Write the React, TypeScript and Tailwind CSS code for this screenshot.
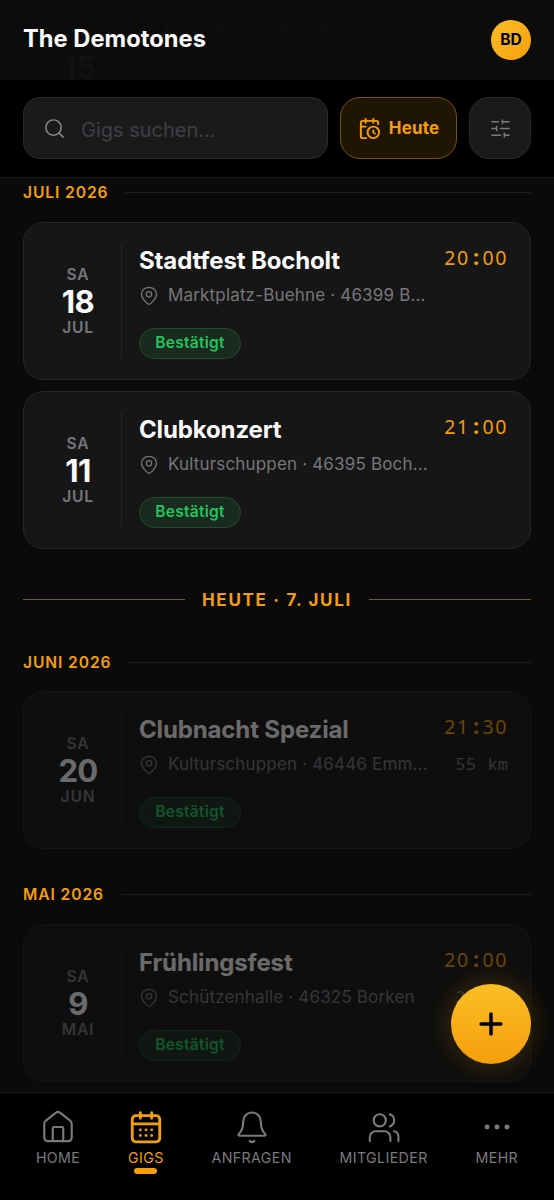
import { CalendarClock, Plus, Search, SlidersHorizontal } from "lucide-react";
import type { ReactNode } from "react";

type Gig = {
  weekday: string;
  day: string;
  month: string;
  title: string;
  location: string;
  time: string;
  distance?: number;
  past?: boolean;
};

const upcoming: Gig[] = [
  { weekday: "SA", day: "18", month: "JUL", title: "Stadtfest Bocholt", location: "Marktplatz-Buehne · 46399 B...", time: "20:00" },
  { weekday: "SA", day: "11", month: "JUL", title: "Clubkonzert", location: "Kulturschuppen · 46395 Boch...", time: "21:00" },
];

const june: Gig = { weekday: "SA", day: "20", month: "JUN", title: "Clubnacht Spezial", location: "Kulturschuppen · 46446 Emm...", time: "21:30", distance: 55, past: true };
const may: Gig = { weekday: "SA", day: "9", month: "MAI", title: "Frühlingsfest", location: "Schützenhalle · 46325 Borken", time: "20:00", distance: 20, past: true };

function Icon({ size, stroke = 1.5, children }: { size: number; stroke?: number; children: ReactNode }) {
  return (
    <svg
      width={size}
      height={size}
      viewBox="0 0 24 24"
      fill="none"
      stroke="currentColor"
      strokeWidth={stroke}
      strokeLinecap="round"
      strokeLinejoin="round"
      className="shrink-0"
    >
      {children}
    </svg>
  );
}

function MonthHeading({ label }: { label: string }) {
  return (
    <div className="flex h-5 items-center gap-[17px]">
      <h2 className="pt-px text-[15.6px] leading-5 font-semibold tracking-[0.9px] text-[#f59e0b]">{label}</h2>
      <div className="h-px flex-1 bg-[#1f1f1f]" />
    </div>
  );
}

function Time({ value }: { value: string }) {
  const [hours, minutes] = value.split(":");

  return (
    <span className="flex font-['Noto_Sans',sans-serif] text-[19.5px] leading-7 tracking-[1.6px] text-[#f59e0b]">
      {hours}
      <span className="w-[12.7px] text-center text-[22px] leading-[25px] font-bold tracking-normal">:</span>
      {minutes}
    </span>
  );
}

function GigCard({ gig }: { gig: Gig }) {
  return (
    <article
      className={`flex h-[157.5px] rounded-[20px] border border-[#262626] bg-[#161616] px-[22px] py-[21px] ${
        gig.past ? "opacity-40" : ""
      }`}
    >
      <div className="flex w-[76px] shrink-0 flex-col items-center justify-center border-r border-[#262626] pr-[11px]">
        <span className="text-[15.6px] leading-5 font-semibold tracking-[0.8px] text-[#76767a]">{gig.weekday}</span>
        <span className="text-[31px] leading-[33px] font-bold tracking-[-0.6px] text-[#fafafa]">{gig.day}</span>
        <span className="text-[15.6px] leading-[19px] font-semibold tracking-[0.8px] text-[#76767a]">{gig.month}</span>
      </div>

      <div className="ml-[17px] min-w-0 flex-1">
        <div className="flex justify-between">
          <h3 className="pt-px text-[24px] leading-8 font-bold tracking-[-0.14px] text-[#fafafa]">{gig.title}</h3>
          <Time value={gig.time} />
        </div>
        <div className="mt-[5.5px] flex h-[26px] items-center text-[#76767a]">
          <Icon size={20}>
            <path d="M12 22C10.800 22 3 15.700 3 10a9 8.500 0 0 1 18 0c0 5.700-7.800 12-9 12Z" />
            <circle cx="12" cy="10" r="3.200" />
          </Icon>
          <span className="ml-[9px] text-[17px] tracking-[0.17px] whitespace-nowrap">{gig.location}</span>
          {gig.distance && (
            <span className="ml-auto flex shrink-0 gap-[11px] text-[17px]">
              <span className="font-['Noto_Sans',sans-serif] text-[16.5px] tracking-[1px]">{gig.distance}</span>
              <span className="pt-px font-['Liberation_Mono',monospace]">km</span>
            </span>
          )}
        </div>
        <span className="mt-[19px] flex h-[31px] w-[102px] items-center justify-center rounded-full border border-[#1c4d2d] bg-[#192a1f] pb-px text-[15.6px] font-semibold tracking-[0.25px] text-[#22c55e]">
          Bestätigt
        </span>
      </div>
    </article>
  );
}

function NavItem({ label, active, children }: { label: string; active?: boolean; children: ReactNode }) {
  return (
    <button type="button" className={`flex flex-col items-center ${active ? "text-[#f59e0b]" : "text-[#7a7a7e]"}`}>
      <Icon size={34} stroke={active ? 2 : 1.5}>
        {children}
      </Icon>
      <span className="mt-1 text-[14.2px] leading-5 tracking-[0.4px]">{label}</span>
      {active && <span className="h-[6px] w-[23px] rounded-full bg-[#f59e0b]" />}
    </button>
  );
}

export default function App() {
  return (
    <div className="relative flex h-[1200px] w-[554px] flex-col overflow-hidden bg-[#0a0a0a] font-['Inter',sans-serif]">
      <header className="relative flex h-20 shrink-0 items-center justify-between bg-[#0c0c0c] px-[23px]">
        {/* scrolled card shining through the translucent bar */}
        <div aria-hidden="true" className="absolute inset-0 text-[#0e0e0e]">
          <span className="absolute top-[56px] left-[63px] text-[31px] leading-6 font-bold text-[#111111]">15</span>
          <span className="absolute top-[12px] left-[139px] text-[24px] leading-8 font-bold">Summer Open A...</span>
          <span className="absolute top-[50px] left-[168px] text-[17px]">Stadtpark-Bühne · 48143 Mün...</span>
          <span className="absolute top-[50px] left-[456px] font-['Liberation_Mono',monospace] text-[17px]">94 km</span>
        </div>
        <h1 className="relative pb-[2px] text-[23.7px] leading-8 font-bold tracking-[0.02px] text-[#fafafa]">The Demotones</h1>
        <div className="relative flex size-10 items-center justify-center rounded-full bg-linear-to-br from-[#fbbf24] to-[#f59e0b] text-[15.6px] font-bold text-black">
          BD
        </div>
      </header>

      <div className="relative flex h-[98px] shrink-0 gap-3 border-b border-[#1a1a1a] bg-black px-[23px] pt-[17px]">
        <div className="flex h-[62px] w-[305px] items-center rounded-[17px] border border-[#2a2a2a] bg-[#1a1a1a] pr-5 pl-[19px]">
          <Search size={23} strokeWidth={1.5} className="text-[#8a8a90]" />
          <span className="ml-[15px] pt-[3px] text-[20px] text-[#3f3f46]">Gigs suchen...</span>
        </div>
        <button
          type="button"
          className="flex h-[62px] w-[117px] items-center justify-center gap-[8px] rounded-[20px] border border-[#7a500a] bg-[#1f1503] text-[17px] font-bold tracking-[0.15px] text-[#f59e0b]"
        >
          <CalendarClock size={23} strokeWidth={2} />
          <span className="pt-px">Heute</span>
        </button>
        <button
          type="button"
          aria-label="Filter"
          className="flex size-[62px] items-center justify-center rounded-[20px] border border-[#2a2a2a] bg-[#1a1a1a] text-[#7a7a7e]"
        >
          <SlidersHorizontal size={23} strokeWidth={1.5} />
        </button>
      </div>

      <main className="min-h-0 flex-1 overflow-hidden px-[23px] pt-1">
        <MonthHeading label="JULI 2026" />
        <div className="mt-5 flex flex-col gap-[11.5px]">
          {upcoming.map((gig) => (
            <GigCard key={gig.day} gig={gig} />
          ))}
        </div>

        <div className="mt-[38.5px] flex h-6 items-center gap-[17px]">
          <div className="h-px flex-1 bg-[#845709]" />
          <span className="pt-px text-[17px] leading-6 font-bold tracking-[1.7px] text-[#f59e0b]">HEUTE · 7. JULI</span>
          <div className="h-px flex-1 bg-[#845709]" />
        </div>

        <div className="mt-[41px]">
          <MonthHeading label="JUNI 2026" />
          <div className="mt-[19.4px]">
            <GigCard gig={june} />
          </div>
        </div>
        <div className="mt-[35.5px]">
          <MonthHeading label="MAI 2026" />
          <div className="mt-5">
            <GigCard gig={may} />
          </div>
        </div>
      </main>

      <button
        type="button"
        aria-label="Neuer Gig"
        className="absolute right-[23px] bottom-[136px] flex size-20 items-center justify-center rounded-full bg-linear-to-b from-[#fbbf24] to-[#f59e0b] text-black shadow-[0_0_28px_rgba(245,158,11,0.25)]"
      >
        <Plus size={34} strokeWidth={2.5} />
      </button>

      <nav className="relative flex h-[108px] shrink-0 items-start justify-around border-t border-[#1f1f1f] bg-black px-[12px] pt-[17px]">
        <NavItem label="HOME">
          <path d="M2.300 9.800v9.700a2.500 2.500 0 0 0 2.500 2.500h14.400a2.500 2.500 0 0 0 2.500-2.500V9.800a3 3 0 0 0-.900-2.100l-7.400-5.800a2.200 2.200 0 0 0-2.800 0L3.200 7.700a3 3 0 0 0-.900 2.100Z" />
          <path d="M8.300 22v-9a1 1 0 0 1 1-1h5.400a1 1 0 0 1 1 1v9" />
        </NavItem>
        <NavItem label="GIGS" active>
          <rect x="2.300" y="4" width="19.400" height="18.500" rx="2.500" />
          <path d="M8 1.800v4M16 1.800v4M2.300 9.800h19.400M8 14h.01M12 14h.01M16 14h.01M8 18h.01M12 18h.01M16 18h.01" />
        </NavItem>
        <NavItem label="ANFRAGEN">
          <path d="M5.800 8a6.200 6.200 0 0 1 12.400 0c0 5.500 1.200 7.300 3 8.800.700.700.300 1.400-.500 1.400H3.300c-.800 0-1.200-.700-.500-1.400 1.800-1.500 3-3.300 3-8.800ZM10.400 21.800c.900.900 2.300.900 3.200 0" />
        </NavItem>
        <NavItem label="MITGLIEDER">
          <circle cx="9" cy="7.300" r="4.300" />
          <path d="M2 22v-3a4 4 0 0 1 4-4h6.500a4 4 0 0 1 4 4v3M16 3a4.500 4.500 0 0 1 0 8.600M19 15a4 4 0 0 1 3.200 4v3" />
        </NavItem>
        <NavItem label="MEHR">
          <g fill="currentColor">
            <circle cx="5" cy="12" r="1" />
            <circle cx="12" cy="12" r="1" />
            <circle cx="19" cy="12" r="1" />
          </g>
        </NavItem>
      </nav>
    </div>
  );
}
